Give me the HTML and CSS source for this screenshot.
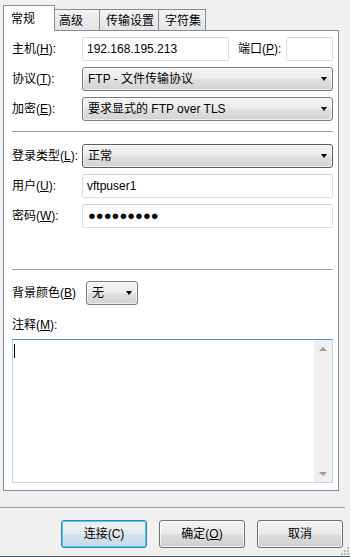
FILE: index.html
```html
<!DOCTYPE html>
<html lang="zh-CN">
<head>
<meta charset="utf-8">
<title>站点设置</title>
<link rel="stylesheet" href="styles.css">
</head>
<body>
<div class="dialog">
  <div class="tabs">
    <div class="tab active">常规</div>
    <div class="tab">高级</div>
    <div class="tab">传输设置</div>
    <div class="tab">字符集</div>
  </div>
  <div class="panel">
    <div class="row">
      <span class="lbl">主机(<u>H</u>):</span>
      <div class="edit host">192.168.195.213</div>
      <span class="port-lbl">端口(<u>P</u>):</span>
      <div class="edit port"></div>
    </div>
    <div class="row gap">
      <span class="lbl">协议(<u>T</u>):</span>
      <div class="combo grow"><span class="val">FTP - 文件传输协议</span><i class="arrow"></i></div>
    </div>
    <div class="row gap">
      <span class="lbl">加密(<u>E</u>):</span>
      <div class="combo grow"><span class="val">要求显式的 FTP over TLS</span><i class="arrow"></i></div>
    </div>
    <div class="sep sep1"></div>
    <div class="row login">
      <span class="lbl">登录类型(<u>L</u>):</span>
      <div class="combo grow dark"><span class="val">正常</span><i class="arrow"></i></div>
    </div>
    <div class="row gap">
      <span class="lbl">用户(<u>U</u>):</span>
      <div class="edit grow">vftpuser1</div>
    </div>
    <div class="row gap">
      <span class="lbl">密码(<u>W</u>):</span>
      <div class="edit grow pass">●●●●●●●●●</div>
    </div>
    <div class="sep sep2"></div>
    <div class="row bg">
      <span class="lbl bg-lbl">背景颜色(<u>B</u>)</span>
      <div class="combo small"><span class="val">无</span><i class="arrow"></i></div>
    </div>
    <div class="note-lbl">注释(<u>M</u>):</div>
    <div class="memo">
      <div class="memo-text"><i class="caret"></i></div>
      <div class="vscroll">
        <div class="sbtn"><i class="up"></i></div>
        <div class="track"></div>
        <div class="sbtn"><i class="down"></i></div>
      </div>
    </div>
  </div>
  <div class="hsep"></div>
  <div class="buttons">
    <div class="btn default">连接(C)</div>
    <div class="btn">确定(<u>O</u>)</div>
    <div class="btn">取消</div>
  </div>
  <div class="bottom-line"></div>
  <svg class="grip" width="10" height="10" viewBox="0 0 10 10">
    <rect x="7" y="1" width="2" height="2" fill="#b8b8b8"/>
    <rect x="4" y="4" width="2" height="2" fill="#b8b8b8"/>
    <rect x="7" y="4" width="2" height="2" fill="#b8b8b8"/>
    <rect x="1" y="7" width="2" height="2" fill="#b8b8b8"/>
    <rect x="4" y="7" width="2" height="2" fill="#b8b8b8"/>
    <rect x="7" y="7" width="2" height="2" fill="#b8b8b8"/>
  </svg>
</div>
</body>
</html>
```

FILE: styles.css
```css
* { box-sizing: border-box; }
html, body { margin: 0; padding: 0; }
body {
  width: 350px;
  height: 557px;
  background: #f0f0f0;
  font-family: "Liberation Sans", "Noto Sans CJK SC", sans-serif;
  font-size: 12px;
  color: #000;
  overflow: hidden;
}
u { text-decoration: underline; text-underline-offset: 1px; }
.dialog {
  position: relative;
  display: flex;
  flex-direction: column;
  height: 557px;
}

/* tabs */
.tabs {
  display: flex;
  align-items: flex-end;
  height: 30px;
  padding-left: 5px;
}
.tab {
  position: relative;
  z-index: 1;
  height: 21px;
  min-width: 48px;
  padding: 1px 4px 0 6px;
  margin-left: -1px;
  line-height: 20px;
  border: 1px solid #898c95;
  border-bottom: none;
  background: linear-gradient(#f3f3f3, #e4e4e4);
  white-space: nowrap;
}
.tab:first-child { margin-left: 0; }
.tab.active {
  z-index: 3;
  height: 26px;
  min-width: 52px;
  margin: 0 -2px -1px -2px;
  padding: 3px 4px 0 7px;
  background: #fff;
}
.tab.active + .tab { margin-left: -1px; }

/* panel */
.panel {
  position: relative;
  z-index: 2;
  margin-left: 3px;
  width: 336px;
  height: 461px;
  border: 1px solid #898c95;
  background: #fff;
  padding: 6px 5px 0 8px;
}
.row {
  display: flex;
  align-items: center;
  height: 24px;
}
.row.gap { margin-top: 6px; }
.row.login { margin-top: 12px; }
.row.bg { margin-top: 11px; }
.lbl {
  width: 70px;
  flex: none;
  line-height: 16px;
  white-space: nowrap;
}
.lbl.bg-lbl { width: 74px; }
.port-lbl {
  margin-left: 9px;
  line-height: 16px;
  white-space: nowrap;
}
.grow { flex: 1; }
.edit {
  height: 24px;
  border: 1px solid #dadee5;
  border-top-color: #cfd3da;
  border-radius: 2px;
  padding-left: 4px;
  line-height: 22px;
  background: #fff;
  white-space: nowrap;
  overflow: hidden;
}
.edit.host { width: 147px; flex: none; }
.edit.port { width: 47px; flex: none; margin-left: auto; }
.edit.pass {
  font-family: "Liberation Sans", "DejaVu Sans", sans-serif;
  font-size: 13px;
  letter-spacing: 0;
  padding-left: 5px;
}

.combo {
  position: relative;
  display: flex;
  align-items: center;
  height: 24px;
  border: 1px solid #7a7a7a;
  border-radius: 3px;
  background: linear-gradient(#f4f4f4 0%, #ececec 45%, #dfdfdf 55%, #d3d3d3 100%);
  box-shadow: inset 0 0 0 1px rgba(255,255,255,0.6);
  padding-left: 5px;
  white-space: nowrap;
}
.combo.dark { border-color: #5c5c5c; }
.combo .val { flex: 1; line-height: 16px; }
.combo .arrow {
  width: 0;
  height: 0;
  margin-right: 5px;
  border-left: 3.5px solid transparent;
  border-right: 3.5px solid transparent;
  border-top: 4px solid #000;
}
.combo.small { width: 52px; flex: none; }

.sep {
  height: 1px;
  background: #a0a0a0;
}
.sep1 { margin-top: 10px; }
.sep2 { margin-top: 41px; }

.note-lbl {
  margin-top: 11px;
  line-height: 18px;
  height: 18px;
}
.memo {
  display: flex;
  margin-top: 5px;
  height: 144px;
  border: 1px solid #b6d4ec;
  border-top-color: #5b8fc0;
  background: #fff;
}
.memo-text {
  flex: 1;
  padding: 4px 0 0 1px;
}
.caret {
  display: block;
  width: 1px;
  height: 14px;
  background: #000;
}
.vscroll {
  width: 18px;
  display: flex;
  flex-direction: column;
  background: #efefef;
}
.sbtn {
  height: 17px;
  display: flex;
  align-items: center;
  justify-content: center;
}
.track { flex: 1; }
.up, .down {
  width: 0;
  height: 0;
  border-left: 4px solid transparent;
  border-right: 4px solid transparent;
}
.up { border-bottom: 4px solid #9a9a9a; }
.down { border-top: 4px solid #9a9a9a; }

/* bottom */
.hsep {
  margin-top: 16px;
  width: 345px;
  height: 1px;
  background: #a0a0a0;
}
.buttons {
  display: flex;
  justify-content: flex-end;
  gap: 12px;
  margin-top: 12px;
  padding-right: 7px;
}
.btn {
  width: 86px;
  height: 28px;
  border: 1px solid #707070;
  border-radius: 3px;
  background: linear-gradient(#f2f2f2 0%, #ebebeb 48%, #dddddd 52%, #cfcfcf 100%);
  box-shadow: inset 0 0 0 1px rgba(255,255,255,0.7);
  text-align: center;
  line-height: 26px;
  white-space: nowrap;
}
.btn.default {
  border-color: #3c7fb1;
  background: linear-gradient(#eef3f7 0%, #e2ebf1 48%, #d4e2eb 52%, #c8d9e4 100%);
  box-shadow: inset 0 0 0 1px #4ec3f5;
}
.bottom-line {
  margin-top: 8px;
  height: 1px;
  background: #4c5562;
}
.grip {
  position: absolute;
  right: 0;
  bottom: 1px;
}
```
